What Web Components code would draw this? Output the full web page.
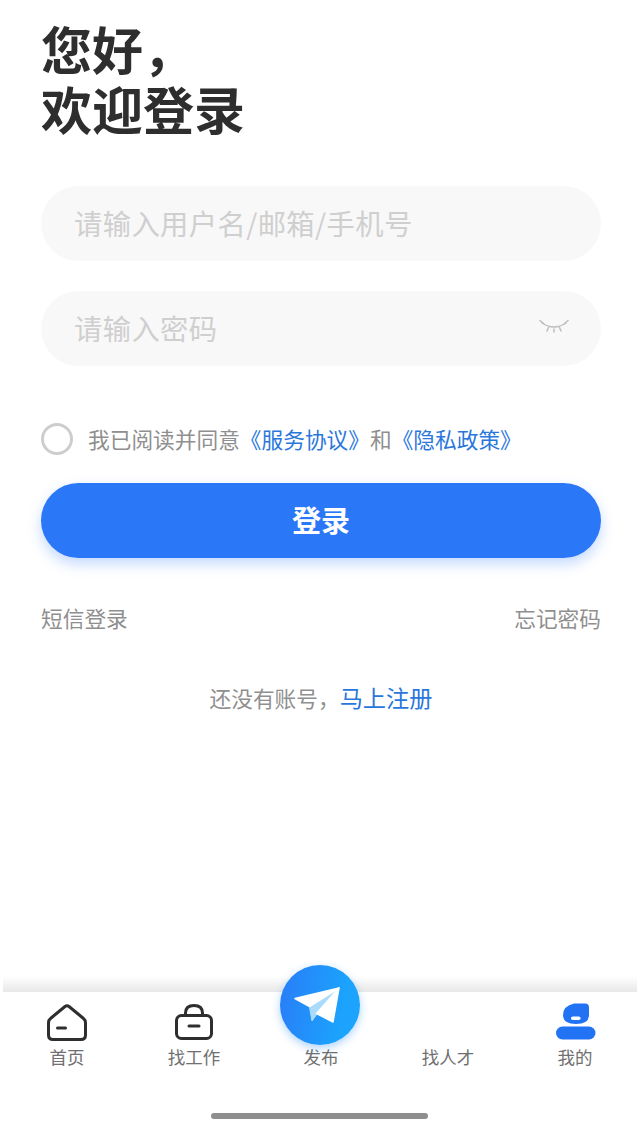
<!DOCTYPE html>
<html lang="zh-CN"><head><meta charset="utf-8">
<style>
html,body{margin:0;padding:0;background:#fff;font-family:"Noto Sans CJK SC","Noto Sans",sans-serif}
login-page{height:1136px}
</style></head><body>
<login-page>
  <field-box placeholder="请输入用户名/邮箱/手机号" slot="fields"></field-box>
  <field-box placeholder="请输入密码" slot="fields" eye></field-box>
  <tab-bar slot="tabs"></tab-bar>
</login-page>
<script>
class FieldBox extends HTMLElement{
  constructor(){super();this.attachShadow({mode:'open'});}
  connectedCallback(){
    const eye=this.hasAttribute('eye')?`<svg width="30" height="15" viewBox="0 0 30 15" fill="none" stroke="#bdbdbd" stroke-width="1.500" stroke-linecap="round"><path d="M3 4Q15 12 27 4M1 1.500 5 5M29 1.500 25 5M9.500 8.500 8 12M20.500 8.500 22 12M15 10V13"/></svg>`:'';
    this.shadowRoot.innerHTML=`<style>
    :host{display:flex;align-items:center;justify-content:space-between;height:75px;box-sizing:border-box;padding:0 32px 0 33px;border-radius:38px;background:#f8f8f8;color:#cfcfcf;font-size:28.300px;letter-spacing:.4px;line-height:40px}
    svg{display:block;margin-top:-4px}
    span{margin-top:-2px}
    </style><span>${this.getAttribute('placeholder')}</span>${eye}`;
  }
}
customElements.define('field-box',FieldBox);

class TabItem extends HTMLElement{
  constructor(){super();this.attachShadow({mode:'open'}).innerHTML=`<style>
    :host{display:flex;flex-direction:column;align-items:center;color:#707070;font-size:17.500px;line-height:24px}
    .i{height:41px;margin-bottom:4px;display:flex;align-items:flex-end;justify-content:center}
    </style><div class="i"><slot name="icon"></slot></div><slot></slot>`;}
}
customElements.define('tab-item',TabItem);

class TabBar extends HTMLElement{
  constructor(){super();this.attachShadow({mode:'open'}).innerHTML=`<style>
    :host{display:block;position:relative;margin:0 3px}
    .shade{height:16px;background:linear-gradient(to bottom,rgba(232,232,232,0),#e8e8e8)}
    .row{display:grid;grid-template-columns:repeat(5,127px);height:78px;padding:8px 0 0 .5px;box-sizing:border-box;background:#fff;overflow:hidden}
    .fab{position:absolute;left:277px;top:-11px;width:80px;height:80px;border-radius:50%;background:linear-gradient(100deg,#2a7cf7 0%,#1ba3fd 75%);box-shadow:0 3px 9px rgba(40,140,250,.38)}
    svg{display:block}
    .up{margin-bottom:1px}
    .me{margin-left:2px}
    </style>
    <div class="shade"></div>
    <div class="row">
      <tab-item><svg slot="icon" width="40" height="37" viewBox="0 0 40 37" fill="none" stroke="#2e2e2e" stroke-width="3" stroke-linejoin="round" stroke-linecap="round"><path d="M18 2.500Q20 1 22 2.500L36.500 14.500Q38.500 16 38.500 19V31Q38.500 35.500 34 35.500H6Q1.500 35.500 1.500 31V19Q1.500 16 3.500 14.500Z"/><path d="M10.500 24H18.500"/></svg>首页</tab-item>
      <tab-item><svg class="up" slot="icon" width="38" height="36" viewBox="0 0 38 36" fill="none" stroke="#2e2e2e" stroke-width="3" stroke-linecap="round" stroke-linejoin="round"><rect x="1.500" y="11.500" width="35" height="23" rx="5"/><path d="M10.500 11V9Q10.500 1.500 19 1.500T27.500 9V11"/><path d="M14 22H24"/></svg>找工作</tab-item>
      <tab-item>发布</tab-item>
      <tab-item>找人才</tab-item>
      <tab-item><svg class="up me" slot="icon" width="40" height="37" viewBox="0 0 40 37"><path fill="#2273f3" d="M18 .5H29Q33 .5 33 4.500V12Q33 21 20 21 7 21 7 12 7 3 18 .5Z"/><rect x="0" y="23.500" width="39.500" height="13" rx="6.500" fill="#2273f3"/><rect x="15" y="13.500" width="9.500" height="3.500" rx="1.750" fill="#fff"/></svg>我的</tab-item>
    </div>
    <div class="fab"><svg width="80" height="80" viewBox="0 0 80 80"><path fill="#a9dcfb" stroke="#a9dcfb" stroke-width="1" stroke-linejoin="round" d="M59 23 29.500 42 32 56 37 49Z"/><path fill="#fff" stroke="#fff" stroke-width="1.500" stroke-linejoin="round" d="M59 23 15 33.500 29.500 41.500Z"/><path fill="#fff" stroke="#fff" stroke-width="1.500" stroke-linejoin="round" d="M59 23 36.500 48.500 53 57Z"/></svg></div>`;}
}
customElements.define('tab-bar',TabBar);

class LoginPage extends HTMLElement{
  constructor(){super();this.attachShadow({mode:'open'}).innerHTML=`<style>
    :host{display:flex;flex-direction:column;width:640px;overflow:hidden;background:#fff;color:#8f8f8f}
    main{flex:1;display:flex;flex-direction:column;padding:18px 39px 0 41px}
    h1{margin:0 0 48px;font-size:51px;line-height:60px;font-weight:700;color:#2e2e2e}
    .fields{display:flex;flex-direction:column;gap:30px}
    .agree{display:flex;align-items:center;margin-top:57px;height:32px;font-size:21.700px;line-height:32px;white-space:nowrap}
    .radio{width:32px;height:32px;box-sizing:border-box;border:3px solid #cdcdcd;border-radius:50%;margin-right:15px;flex:none}
    a{color:#2a77dc;text-decoration:none}
    button{margin-top:28px;height:75px;border:0;border-radius:38px;background:#2a77f8;color:#fff;font:700 29px/40px "Noto Sans CJK SC",sans-serif;box-shadow:0 6px 14px rgba(42,119,248,.28);padding:0 0 3px}
    .links{display:flex;justify-content:space-between;margin-top:44px;font-size:21.700px;line-height:32px}
    .reg{margin-top:47px;text-align:center;font-size:21.700px;line-height:32px}
    .reg a{font-size:23.200px}
    .bar{height:66px;display:flex;justify-content:center}
    .bar i{display:block;width:217px;height:6px;margin:43px 0 0 -1px;border-radius:3px;background:#8e8e8e}
    </style>
    <main>
      <h1>您好，<br>欢迎登录</h1>
      <div class="fields"><slot name="fields"></slot></div>
      <div class="agree"><span class="radio"></span><span>我已阅读并同意</span><a>《服务协议》</a><span>和</span><a>《隐私政策》</a></div>
      <button>登录</button>
      <div class="links"><span>短信登录</span><span>忘记密码</span></div>
      <div class="reg">还没有账号，<a>马上注册</a></div>
    </main>
    <slot name="tabs"></slot>
    <div class="bar"><i></i></div>`;}
}
customElements.define('login-page',LoginPage);
</script>
</body></html>
